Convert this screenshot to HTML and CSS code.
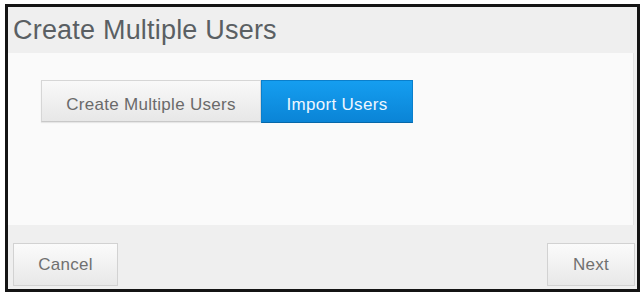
FILE: index.html
```html
<!DOCTYPE html>
<html>
<head>
<meta charset="utf-8">
<link rel="stylesheet" href="styles.css">
</head>
<body>
<div class="dialog">
  <div class="header">Create Multiple Users</div>
  <div class="content">
    <div class="tabs">
      <div class="tab tab-create">Create Multiple Users</div>
      <div class="tab tab-import">Import Users</div>
    </div>
  </div>
  <div class="footer">
    <div class="btn btn-cancel">Cancel</div>
    <div class="btn btn-next">Next</div>
  </div>
</div>
</body>
</html>
```

FILE: styles.css
```css
html, body {
  margin: 0;
  padding: 0;
  background: #ffffff;
}
body {
  padding: 4px 0 0 5px;
  font-family: "Liberation Sans", Arial, sans-serif;
}
.dialog {
  width: 629px;
  height: 282px;
  border: 3px solid #141414;
  display: flex;
  flex-direction: column;
  background: #efefef;
}
.header {
  flex: 0 0 46px;
  background: #efefef;
  padding-left: 5px;
  font-size: 27px;
  letter-spacing: 0.2px;
  line-height: 46px;
  color: #5a5f63;
}
.content {
  flex: 0 0 172px;
  box-sizing: border-box;
  background: #fafafa;
  margin-right: 3px;
  border-right: 1px solid #e4e4e4;
  padding: 27px 0 0 33px;
}
.tabs {
  display: flex;
}
.tab {
  box-sizing: border-box;
  height: 42px;
  padding-top: 14px;
  line-height: 19px;
  font-size: 17px;
  letter-spacing: 0.3px;
  text-align: center;
}
.tab-create {
  width: 220px;
  border: 1px solid #d6d6d6;
  border-bottom-color: #c8c8c8;
  background: linear-gradient(#f9f9f9, #e7e7e7);
  color: #6a6a6a;
  box-shadow: 0 1px 1px rgba(0,0,0,0.08);
}
.tab-import {
  width: 152px;
  height: 43px;
  border: 1px solid #0a7fcc;
  border-bottom-color: #0667a8;
  background: linear-gradient(#159ef0, #0a84d6);
  color: #eef7ff;
}
.footer {
  flex: 1;
  background: #efefef;
  display: flex;
  justify-content: space-between;
  align-items: flex-end;
  padding: 0 2px 3px 5px;
}
.btn {
  box-sizing: border-box;
  height: 43px;
  line-height: 41px;
  border: 1px solid #d2d2d2;
  background: linear-gradient(#fbfbfb, #e8e8e8);
  font-size: 17px;
  letter-spacing: 0.3px;
  color: #707070;
  text-align: center;
}
.btn-cancel {
  width: 105px;
}
.btn-next {
  width: 88px;
}
```
